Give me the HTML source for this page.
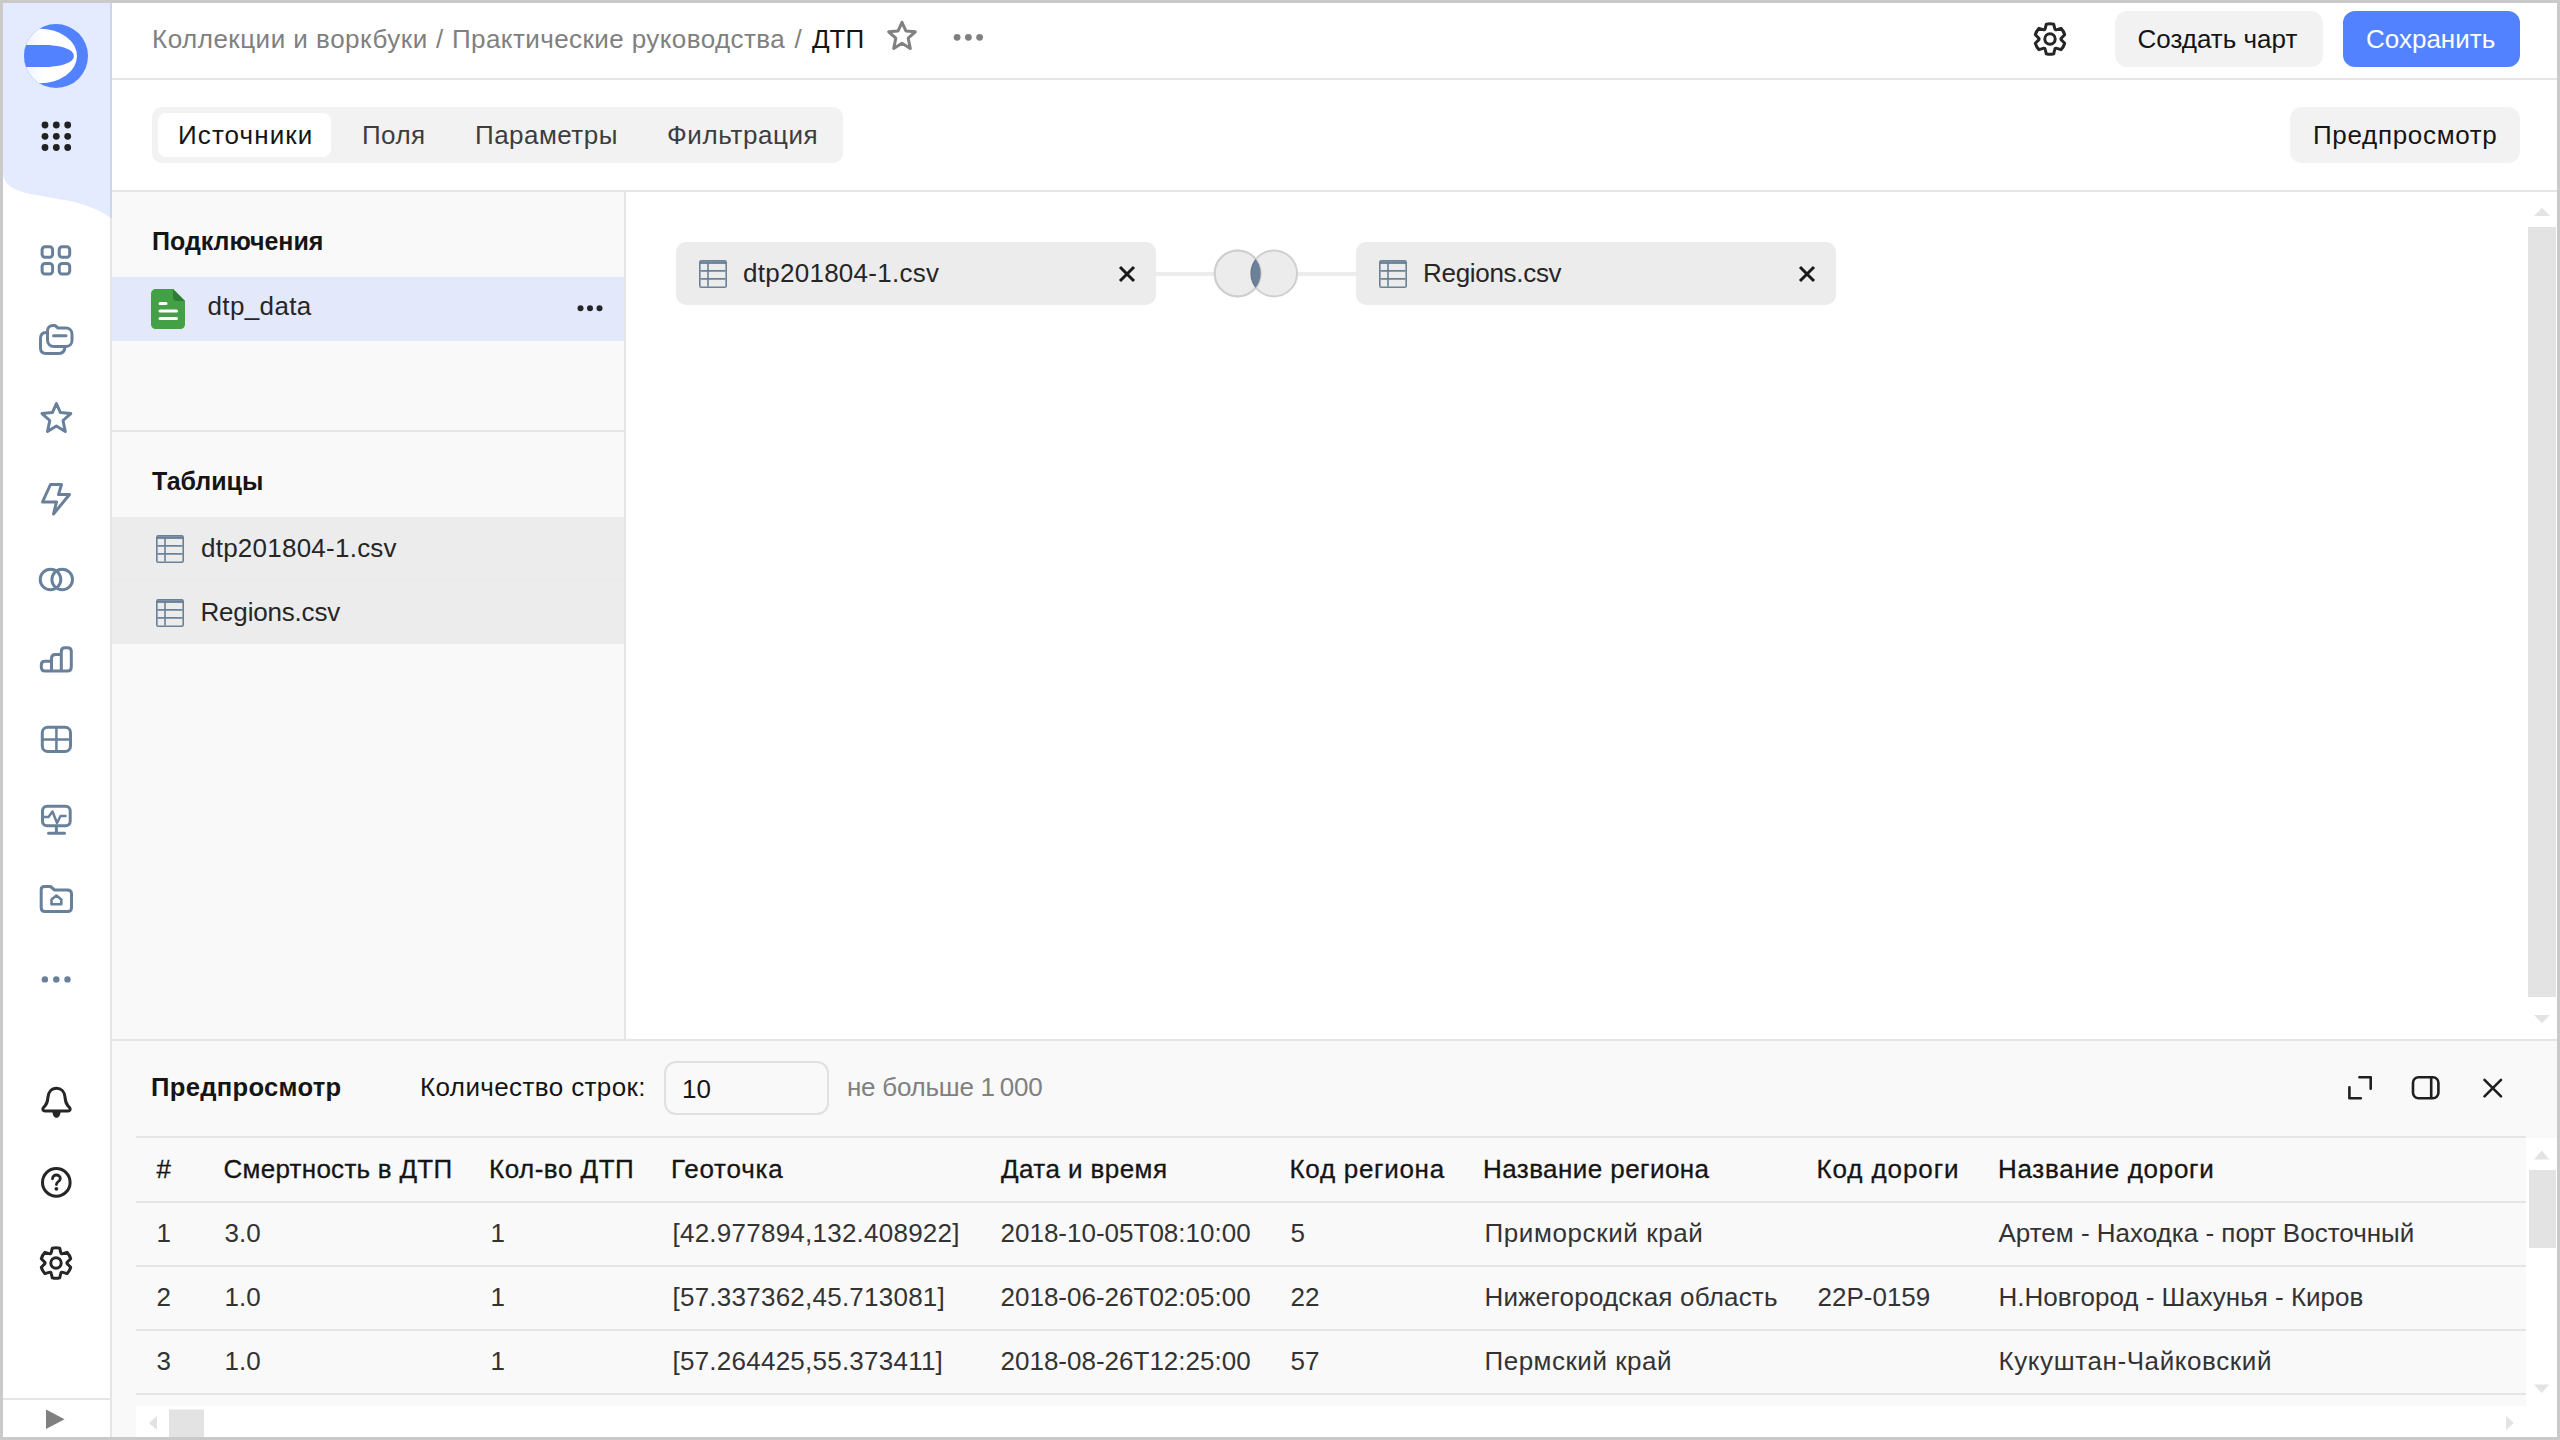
<!DOCTYPE html>
<html><head><meta charset="utf-8">
<style>
html,body{margin:0;padding:0;}
body{width:2560px;height:1440px;position:relative;overflow:hidden;background:#fff;font-family:"Liberation Sans",sans-serif;color:#262626;}
.a{position:absolute;}
.t{position:absolute;white-space:nowrap;font-size:26px;line-height:30px;}
.b{font-weight:bold;}
.g{color:#808080;}
.th{color:#151515;-webkit-text-stroke:0.3px #151515;}
svg{position:absolute;overflow:visible;}
</style></head><body>

<!-- SIDEBAR -->
<div class="a" style="left:3px;top:3px;width:107px;height:1434px;background:#fff;"></div>
<svg style="left:0;top:0" width="112" height="230"><path d="M3,0 H111 V218 C100,210 90,206 70,201 L30,194 C12,190 3,184 3,172 Z" fill="#e5ebff"/></svg>
<div class="a" style="left:110px;top:0;width:2px;height:218px;background:#cfd6eb;"></div>
<div class="a" style="left:110px;top:218px;width:2px;height:1222px;background:#e5e5e5;"></div>
<div class="a" style="left:3px;top:1398px;width:107px;height:2px;background:#e5e5e5;"></div>

<!-- logo -->
<svg style="left:24px;top:24px" width="64" height="64" viewBox="0 0 64 64">
<defs><clipPath id="lc"><circle cx="32" cy="32" r="32"/></clipPath>
<linearGradient id="lg" x1="0" x2="1" y1="0" y2="0"><stop offset="0" stop-color="#dce4ff"/><stop offset="0.55" stop-color="#fff"/></linearGradient></defs>
<circle cx="32" cy="32" r="32" fill="#5282ff"/>
<g clip-path="url(#lc)"><ellipse cx="16" cy="32" rx="37" ry="27.2" fill="url(#lg)"/><path d="M-2,20.9 L20,21 C40,21.4 49.8,26 49.8,32 C49.8,38 40,42.6 20,43 L-2,43.1 Z" fill="#5282ff"/></g>
</svg>
<!-- 9 dots -->
<svg style="left:0;top:0" width="112" height="160" fill="#222">
<circle cx="45" cy="125" r="3.4"/><circle cx="56.3" cy="125" r="3.4"/><circle cx="67.7" cy="125" r="3.4"/>
<circle cx="45" cy="136.3" r="3.4"/><circle cx="56.3" cy="136.3" r="3.4"/><circle cx="67.7" cy="136.3" r="3.4"/>
<circle cx="45" cy="147.5" r="3.4"/><circle cx="56.3" cy="147.5" r="3.4"/><circle cx="67.7" cy="147.5" r="3.4"/>
</svg>

<!-- sidebar icons -->
<svg style="left:0;top:0" width="112" height="1440" fill="none" stroke="#68809a" stroke-width="3" stroke-linecap="round" stroke-linejoin="round">
<!-- dashboards grid -->
<rect x="42.1" y="246.7" width="10.5" height="10.5" rx="3"/><rect x="59.2" y="246.7" width="10.5" height="10.5" rx="3"/>
<rect x="42.1" y="263.5" width="10.5" height="10.5" rx="3"/><rect x="59.2" y="263.5" width="10.5" height="10.5" rx="3"/>
<!-- collections -->
<path d="M47.5,331 V340 C47.5,344 50,346.5 54,346.5 H66 C69.5,346.5 72,344 72,340.5 V334 C72,330.5 69.5,328 66,328 H58 L55,325.5 H53 C50,325.5 47.5,327.5 47.5,331 Z"/>
<path d="M53.5,335.7 H66"/>
<path d="M46,332.5 C42,332.5 40.5,335 40.5,338.5 V348 C40.5,351.5 42.5,353.5 46,353.5 H59 C62.5,353.5 64.5,351.5 65,347"/>
<!-- star -->
<path d="M56.4,403.5 L60.4,412.6 L70.8,413.6 L63,420.5 L65.3,431.5 L56.4,426 L47.5,431.5 L49.8,420.5 L42,413.6 L52.4,412.6 Z"/>
<!-- lightning -->
<path d="M50.5,484.5 H61.5 L58.5,494.5 H69.5 L53.5,514 L56.5,502 H42.5 Z"/>
<!-- rings -->
<circle cx="50.5" cy="579.5" r="10.3"/><circle cx="62.2" cy="579.5" r="10.3"/>
<!-- bar chart -->
<path d="M45,671 H67.5 C70,671 71.3,669.5 71.3,667 V651.5 C71.3,649 70,647.8 67.5,647.8 H65 C62.5,647.8 61.3,649 61.3,651.5 V671 M61.3,654.5 H55.3 C52.8,654.5 51.5,656 51.5,658.5 V671 M51.5,661.2 H45 C42.5,661.2 41.3,662.5 41.3,665 V667 C41.3,669.5 42.5,671 45,671"/>
<!-- table grid -->
<rect x="42.3" y="727.3" width="28.2" height="24.2" rx="5.5"/>
<path d="M56.4,728 V751 M43,739.4 H70" stroke-width="2.5"/>
<!-- monitor -->
<rect x="42.5" y="806.3" width="27.7" height="19.5" rx="4.5"/>
<path d="M43,817 H48.5 L52.5,811.5 L57,823 L60.5,816 H65.5" stroke-width="2.5"/>
<path d="M56.4,826 V832.5 M48.5,833.2 H64.5"/>
<!-- folder -->
<path d="M41.2,889.5 C41.2,887.5 42.5,886.5 44.5,886.5 H50.5 L54.5,890 H67.5 C70,890 71.5,891.5 71.5,894 V907.5 C71.5,910 70,911.5 67.5,911.5 H45 C42.5,911.5 41.2,910 41.2,907.5 Z"/>
<path d="M51.5,899.5 L56.4,895.5 L61.3,899.5 V904.3 H51.5 Z" stroke-width="2.6"/>
</svg>
<svg style="left:0;top:0" width="112" height="1440" fill="#68809a">
<circle cx="44.9" cy="979.4" r="3.2"/><circle cx="56.3" cy="979.4" r="3.2"/><circle cx="67.5" cy="979.4" r="3.2"/>
</svg>
<svg style="left:0;top:0" width="112" height="1440" fill="none" stroke="#262626" stroke-width="3" stroke-linecap="round" stroke-linejoin="round">
<!-- bell -->
<path d="M56.5,1088.3 C51.5,1088.3 48.5,1092 48,1097 C47.5,1102 47,1104.5 43.5,1107.5 C42,1109 43,1111 45,1111 H68 C70,1111 71,1109 69.5,1107.5 C66,1104.5 65.5,1102 65,1097 C64.5,1092 61.5,1088.3 56.5,1088.3 Z"/>
<!-- help -->
<circle cx="56.3" cy="1182.4" r="13.8"/>
<path d="M52.5,1178.8 C52.5,1176.5 54.2,1175 56.4,1175 C58.6,1175 60.3,1176.5 60.3,1178.5 C60.3,1181.5 56.4,1181.5 56.4,1184.5" stroke-width="2.8"/>
</svg>
<svg style="left:0;top:0" width="112" height="1440" fill="#262626">
<path d="M52.5,1112 H60.5 C60.5,1115 58.8,1117.8 56.5,1117.8 C54.2,1117.8 52.5,1115 52.5,1112 Z"/>
<circle cx="56.4" cy="1188.8" r="1.9"/>
<path d="M46,1409.6 L64.6,1419.3 L46,1429 Z" fill="#808080"/>
</svg>
<svg style="left:40.4px;top:1246.7px" width="32" height="32" viewBox="0 0 32 32" fill="none" stroke="#262626" stroke-width="3" stroke-linejoin="round">
<path id="gearp" d="M20.72,5.40 L19.70,1.15 A15.30,15.30 0 0 0 12.30,1.15 L11.28,5.40 Q10.90,7.17 9.18,6.62 L4.99,5.37 A15.30,15.30 0 0 0 1.29,11.78 L4.46,14.79 Q5.80,16.00 4.46,17.21 L1.29,20.22 A15.30,15.30 0 0 0 4.99,26.63 L9.18,25.38 Q10.90,24.83 11.28,26.60 L12.30,30.85 A15.30,15.30 0 0 0 19.70,30.85 L20.72,26.60 Q21.10,24.83 22.82,25.38 L27.01,26.63 A15.30,15.30 0 0 0 30.71,20.22 L27.54,17.21 Q26.20,16.00 27.54,14.79 L30.71,11.78 A15.30,15.30 0 0 0 27.01,5.37 L22.82,6.62 Q21.10,7.17 20.72,5.40 Z"/>
<circle cx="16" cy="16" r="5.2"/>
</svg>

<!-- HEADER -->
<div class="a" style="left:112px;top:78px;width:2445px;height:2px;background:#e5e5e5;"></div>
<div class="t g" style="left:152px;top:23.5px;letter-spacing:0.5px;">Коллекции и воркбуки</div>
<div class="t g" style="left:436px;top:23.5px;">/</div>
<div class="t g" style="left:452px;top:23.5px;letter-spacing:0.42px;">Практические руководства</div>
<div class="t g" style="left:794.5px;top:23.5px;">/</div>

<div class="t" style="left:812px;top:23.5px;color:#151515;">ДТП</div>
<svg style="left:884px;top:18px" width="36" height="36" fill="none" stroke="#808080" stroke-width="3" stroke-linejoin="round">
<path d="M18,4.3 L21.9,12.9 L31.3,13.8 L24.2,20.2 L26.3,30.5 L18,25.3 L9.7,30.5 L11.8,20.2 L4.7,13.8 L14.1,12.9 Z"/>
</svg>
<svg style="left:0;top:0" width="1000" height="80" fill="#808080">
<circle cx="957.1" cy="37.3" r="3.4"/><circle cx="968.4" cy="37.3" r="3.4"/><circle cx="979.6" cy="37.3" r="3.4"/>
</svg>
<svg style="left:2034px;top:23px" width="32" height="32" viewBox="0 0 32 32" fill="none" stroke="#262626" stroke-width="3" stroke-linejoin="round">
<use href="#gearp"/><circle cx="16" cy="16" r="5.2"/>
</svg>
<div class="a" style="left:2115px;top:11px;width:208px;height:56px;border-radius:12px;background:#f2f2f2;"></div>
<div class="t" style="left:2137.5px;top:23.5px;color:#151515;">Создать чарт</div>
<div class="a" style="left:2343px;top:11px;width:177px;height:56px;border-radius:12px;background:#5282ff;"></div>
<div class="t" style="left:2366px;top:23.5px;color:#fff;">Сохранить</div>

<!-- TABS -->
<div class="a" style="left:152px;top:107px;width:691px;height:56px;border-radius:10px;background:#f2f2f2;"></div>
<div class="a" style="left:158px;top:113px;width:173px;height:44px;border-radius:8px;background:#fff;"></div>
<div class="t" style="left:178px;top:120px;color:#151515;letter-spacing:1.1px;">Источники</div>
<div class="t" style="left:362px;top:120px;color:#3d3d3d;letter-spacing:0.4px;">Поля</div>
<div class="t" style="left:475px;top:120px;color:#3d3d3d;letter-spacing:0.47px;">Параметры</div>
<div class="t" style="left:667px;top:120px;color:#3d3d3d;letter-spacing:0.6px;">Фильтрация</div>
<div class="a" style="left:2290px;top:107px;width:230px;height:56px;border-radius:12px;background:#f2f2f2;"></div>
<div class="t" style="left:2313px;top:120px;color:#151515;letter-spacing:0.68px;">Предпросмотр</div>
<div class="a" style="left:112px;top:190px;width:2445px;height:2px;background:#e5e5e5;"></div>

<!-- LEFT PANEL -->
<div class="a" style="left:112px;top:192px;width:512px;height:847px;background:#f9f9f9;"></div>
<div class="a" style="left:624px;top:192px;width:2px;height:847px;background:#e5e5e5;"></div>
<div class="t b" style="left:152px;top:226px;font-size:25px;color:#151515;">Подключения</div>
<div class="a" style="left:112px;top:277px;width:512px;height:64px;background:#e3e8fb;"></div>
<svg style="left:151px;top:289px" width="34" height="40" viewBox="0 0 34 40">
<path d="M5,0 H22 L34,12 V35 C34,38 32,40 29,40 H5 C2,40 0,38 0,35 V5 C0,2 2,0 5,0 Z" fill="#43a047"/>
<path d="M22,0 L34,12 H26 C23.5,12 22,10.5 22,8 Z" fill="#2e7d32"/>
<path d="M9,14.5 H15 M9,22 H25.5 M9,29.5 H25.5" stroke="#fff" stroke-width="3" stroke-linecap="round"/>
</svg>
<div class="t" style="left:207.5px;top:291px;letter-spacing:0.37px;">dtp_data</div>
<svg style="left:0;top:0" width="620" height="330" fill="#262626">
<circle cx="580.5" cy="308.3" r="3"/><circle cx="590" cy="308.3" r="3"/><circle cx="599.5" cy="308.3" r="3"/>
</svg>
<div class="a" style="left:112px;top:430px;width:512px;height:2px;background:#e5e5e5;"></div>
<div class="t b" style="left:152px;top:466px;font-size:25px;color:#151515;">Таблицы</div>
<div class="a" style="left:112px;top:517px;width:512px;height:63px;background:#ececec;"></div>
<div class="a" style="left:112px;top:581px;width:512px;height:63px;background:#ececec;"></div>
<div class="a" style="left:112px;top:580px;width:512px;height:1px;background:#e9e9e9;"></div>
<svg style="left:156px;top:535px" width="28" height="28" viewBox="0 0 28 28" fill="none" stroke="#6a8198" stroke-width="1.6">
<rect x="0.8" y="0.8" width="26.4" height="26.4" rx="1.5"/><path d="M1,2.6 H27" stroke-width="2.6"/><path d="M1.5,10.9 H26.5 M1.5,18.9 H26.5 M9,3 V26.5"/></svg>
<div class="t" style="left:201px;top:533px;letter-spacing:0.24px;">dtp201804-1.csv</div>
<svg style="left:156px;top:599px" width="28" height="28" viewBox="0 0 28 28" fill="none" stroke="#6a8198" stroke-width="1.6">
<rect x="0.8" y="0.8" width="26.4" height="26.4" rx="1.5"/><path d="M1,2.6 H27" stroke-width="2.6"/><path d="M1.5,10.9 H26.5 M1.5,18.9 H26.5 M9,3 V26.5"/></svg>
<div class="t" style="left:200.5px;top:597px;letter-spacing:-0.19px;">Regions.csv</div>

<!-- CANVAS -->
<div class="a" style="left:1156px;top:272px;width:200px;height:3.5px;background:#ececec;"></div>
<div class="a" style="left:676px;top:242px;width:480px;height:63px;border-radius:10px;background:#ececec;"></div>
<svg style="left:699px;top:260px" width="28" height="28" viewBox="0 0 28 28" fill="none" stroke="#6a8198" stroke-width="1.6">
<rect x="0.8" y="0.8" width="26.4" height="26.4" rx="1.5"/><path d="M1,2.6 H27" stroke-width="2.6"/><path d="M1.5,10.9 H26.5 M1.5,18.9 H26.5 M9,3 V26.5"/></svg>
<div class="t" style="left:743px;top:258px;letter-spacing:0.27px;">dtp201804-1.csv</div>
<svg style="left:1119px;top:266px" width="16" height="16" fill="none" stroke="#1a1a1a" stroke-width="3" stroke-linecap="butt"><path d="M1,1 L15,15 M15,1 L1,15"/></svg>
<div class="a" style="left:1356px;top:242px;width:480px;height:63px;border-radius:10px;background:#ececec;"></div>
<svg style="left:1379px;top:260px" width="28" height="28" viewBox="0 0 28 28" fill="none" stroke="#6a8198" stroke-width="1.6">
<rect x="0.8" y="0.8" width="26.4" height="26.4" rx="1.5"/><path d="M1,2.6 H27" stroke-width="2.6"/><path d="M1.5,10.9 H26.5 M1.5,18.9 H26.5 M9,3 V26.5"/></svg>
<div class="t" style="left:1423px;top:257.5px;letter-spacing:-0.3px;">Regions.csv</div>
<svg style="left:1799px;top:266px" width="16" height="16" fill="none" stroke="#1a1a1a" stroke-width="3" stroke-linecap="butt"><path d="M1,1 L15,15 M15,1 L1,15"/></svg>
<svg style="left:1200px;top:240px" width="120" height="70" viewBox="1200 240 120 70">
<defs><clipPath id="cl"><circle cx="1237.7" cy="273.4" r="23"/></clipPath></defs>
<circle cx="1237.7" cy="273.4" r="23" fill="#ececec" stroke="#cfcfcf" stroke-width="2"/>
<circle cx="1274" cy="273.4" r="23" fill="#ececec" stroke="#cfcfcf" stroke-width="2"/>
<circle cx="1237.7" cy="273.4" r="23" fill="none" stroke="#cfcfcf" stroke-width="2"/>
<circle cx="1274" cy="273.4" r="23" fill="#6a8199" stroke="#5a7088" stroke-width="1" clip-path="url(#cl)"/>
</svg>
<!-- canvas scrollbar -->
<svg style="left:2528px;top:200px" width="28" height="830" fill="#e3e3e3">
<path d="M6,16 L14,7.8 L22,16 Z"/><rect x="0" y="27" width="28" height="770"/><path d="M6,815 L14,823.2 L22,815 Z"/>
</svg>

<!-- PREVIEW -->
<div class="a" style="left:112px;top:1039px;width:2445px;height:2px;background:#e5e5e5;"></div>
<div class="a" style="left:112px;top:1041px;width:2445px;height:396px;background:#f9f9f9;"></div>
<div class="t b" style="left:151px;top:1072px;font-size:25.6px;color:#151515;letter-spacing:0.3px;">Предпросмотр</div>
<div class="t" style="left:420px;top:1072px;color:#151515;letter-spacing:0.39px;">Количество строк:</div>
<div class="a" style="left:664px;top:1061px;width:161px;height:50px;border:2px solid #e0e0e0;border-radius:12px;background:#f9f9f9;"></div>
<div class="t" style="left:682px;top:1074px;color:#151515;">10</div>
<div class="t g" style="left:847px;top:1072px;letter-spacing:-0.25px;">не больше 1&#8201;000</div>
<svg style="left:2340px;top:1068px" width="176" height="40" viewBox="2340 1068 176 40" fill="none" stroke="#1f1f1f" stroke-width="2.6" stroke-linecap="round" stroke-linejoin="round">
<path d="M2359.4,1077.3 H2370.7 V1088.7 M2349.4,1087.3 V1098.3 H2360.8"/>
<rect x="2413" y="1077.3" width="25.4" height="21" rx="5.5"/><path d="M2431.2,1078 V1097.5"/>
<path d="M2484.5,1079.8 L2501,1096.3 M2501,1079.8 L2484.5,1096.3"/>
</svg>
<!-- table -->
<div class="a" style="left:136px;top:1136px;width:2390px;height:2px;background:#e5e5e5;"></div>
<div class="a" style="left:136px;top:1201px;width:2390px;height:2px;background:#e5e5e5;"></div>
<div class="a" style="left:136px;top:1265px;width:2390px;height:2px;background:#e5e5e5;"></div>
<div class="a" style="left:136px;top:1329px;width:2390px;height:2px;background:#e5e5e5;"></div>
<div class="a" style="left:136px;top:1393px;width:2390px;height:2px;background:#e5e5e5;"></div>
<div class="a" style="left:2526px;top:1138px;width:31px;height:299px;background:#fff;"></div>
<div class="a" style="left:136px;top:1406px;width:2390px;height:31px;background:#fff;"></div>
<svg style="left:0;top:0" width="2560" height="1440" fill="#e3e3e3">
<path d="M2534,1159.6 L2541.7,1150.5 L2549.4,1159.6 Z"/>
<rect x="2529" y="1170" width="27" height="78"/>
<path d="M2534,1384.5 L2541.7,1393 L2549.4,1384.5 Z"/>
<path d="M157,1416 L148.8,1423 L157,1430 Z"/>
<rect x="169" y="1409.5" width="35" height="27.5"/>
<path d="M2506,1416 L2514,1423 L2506,1430 Z"/>
</svg>
<div class="t th" style="left:156.5px;top:1154px;">#</div>
<div class="t th" style="left:223.5px;top:1154px;letter-spacing:0.27px;">Смертность в ДТП</div>
<div class="t th" style="left:489px;top:1154px;letter-spacing:0.5px;">Кол-во ДТП</div>
<div class="t th" style="left:671px;top:1154px;letter-spacing:0.8px;">Геоточка</div>
<div class="t th" style="left:1001px;top:1154px;letter-spacing:0.43px;">Дата и время</div>
<div class="t th" style="left:1289.5px;top:1154px;letter-spacing:0.7px;">Код региона</div>
<div class="t th" style="left:1483px;top:1154px;letter-spacing:0.43px;">Название региона</div>
<div class="t th" style="left:1816.5px;top:1154px;letter-spacing:0.9px;">Код дороги</div>
<div class="t th" style="left:1998px;top:1154px;letter-spacing:0.7px;">Название дороги</div>
<div class="t" style="left:156.5px;top:1218px;color:#333;">1</div>
<div class="t" style="left:224.5px;top:1218px;color:#333;">3.0</div>
<div class="t" style="left:490.5px;top:1218px;color:#333;">1</div>
<div class="t" style="left:672.5px;top:1218px;color:#333;letter-spacing:0.24px;">[42.977894,132.408922]</div>
<div class="t" style="left:1000.5px;top:1218px;color:#333;">2018-10-05T08:10:00</div>
<div class="t" style="left:1290.5px;top:1218px;color:#333;">5</div>
<div class="t" style="left:1484.5px;top:1218px;color:#333;letter-spacing:0.6px;">Приморский край</div>
<div class="t" style="left:1998.5px;top:1218px;color:#333;">Артем - Находка - порт Восточный</div>
<div class="t" style="left:156.5px;top:1282px;color:#333;">2</div>
<div class="t" style="left:224.5px;top:1282px;color:#333;">1.0</div>
<div class="t" style="left:490.5px;top:1282px;color:#333;">1</div>
<div class="t" style="left:672.5px;top:1282px;color:#333;letter-spacing:0.24px;">[57.337362,45.713081]</div>
<div class="t" style="left:1000.5px;top:1282px;color:#333;">2018-06-26T02:05:00</div>
<div class="t" style="left:1290.5px;top:1282px;color:#333;">22</div>
<div class="t" style="left:1484.5px;top:1282px;color:#333;letter-spacing:0.2px;">Нижегородская область</div>
<div class="t" style="left:1817.5px;top:1282px;color:#333;">22P-0159</div>
<div class="t" style="left:1998.5px;top:1282px;color:#333;">Н.Новгород - Шахунья - Киров</div>
<div class="t" style="left:156.5px;top:1346px;color:#333;">3</div>
<div class="t" style="left:224.5px;top:1346px;color:#333;">1.0</div>
<div class="t" style="left:490.5px;top:1346px;color:#333;">1</div>
<div class="t" style="left:672.5px;top:1346px;color:#333;letter-spacing:0.24px;">[57.264425,55.373411]</div>
<div class="t" style="left:1000.5px;top:1346px;color:#333;">2018-08-26T12:25:00</div>
<div class="t" style="left:1290.5px;top:1346px;color:#333;">57</div>
<div class="t" style="left:1484.5px;top:1346px;color:#333;letter-spacing:0.5px;">Пермский край</div>
<div class="t" style="left:1998.5px;top:1346px;color:#333;letter-spacing:0.6px;">Кукуштан-Чайковский</div>

<!-- OUTER BORDER -->
<div class="a" style="left:0;top:0;width:2554px;height:1434px;border:3px solid #cacaca;"></div>
</body></html>
